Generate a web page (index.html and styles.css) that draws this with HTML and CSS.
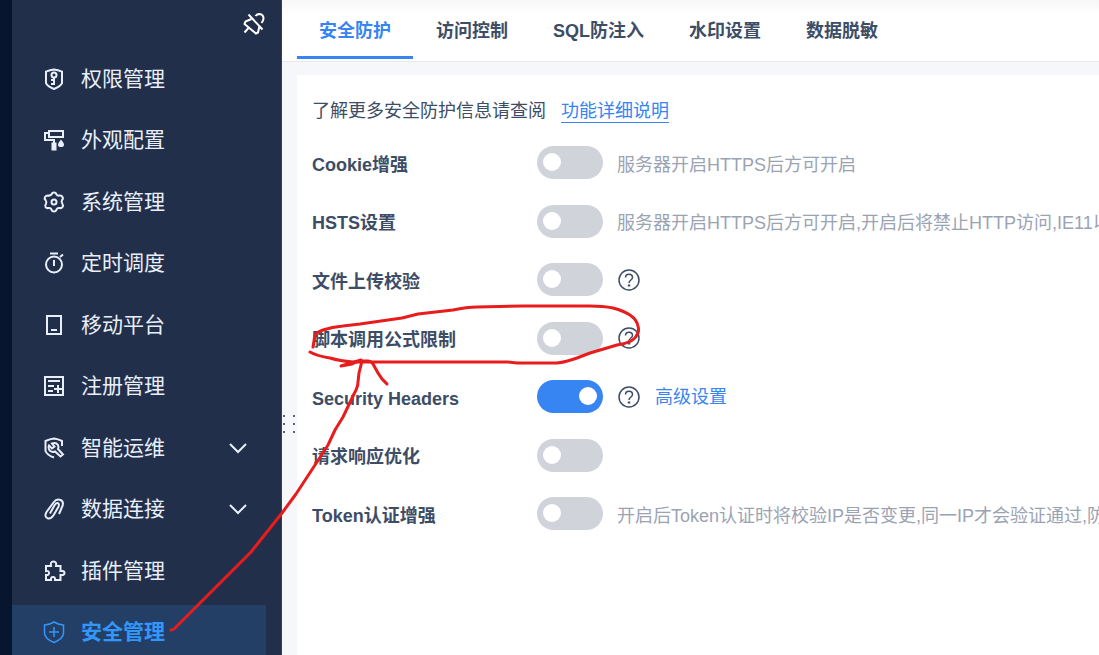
FILE: index.html
```html
<!DOCTYPE html>
<html lang="zh-CN">
<head>
    <meta charset="UTF-8">
    <meta name="viewport" content="width=device-width, initial-scale=1.0">
    <title>安全管理</title>
    <link rel="stylesheet" href="styles.css">
</head>
<body>
    <svg class="symbols" aria-hidden="true">
        <symbol id="chevron" viewBox="0 0 20 12">
            <path d="M2 2l8 8 8-8"/>
        </symbol>
        <symbol id="help" viewBox="0 0 22 22">
            <circle cx="11" cy="11" r="10"/>
            <path d="M7.500 8.500c0-4.500 7-4.500 7 0 0 2.500-3.500 2.500-3.500 5.500"/>
            <path d="M11 15.500v2" stroke-width="2.500"/>
        </symbol>
    </svg>

    <div class="layout">
        <div class="rail"></div>
        <aside class="sidebar">
            <div class="sidebar-head">
                <button type="button" class="pin" aria-label="取消固定">
                    <svg viewBox="0 0 24 24">
                        <path d="M6.500 2.500L20.500 17.500"/>
                        <path d="M9.500 7L3.500 9.500 2.500 12l11.500 9.500 2-1 1.500-6.500"/>
                        <path d="M6.500 16L2.500 20.500"/>
                        <path d="M13.500 4q1.500-2 4-2 4 .5 4 4.500 0 2-2 4.500"/>
                    </svg>
                </button>
            </div>
            <nav class="menu">
                <a href="#" class="menu-item">
                    <svg viewBox="0 0 24 24">
                        <path d="M12 2.500q-4 .5-8 2.200v11.500q1.500 3.500 8 5.800 6.500-2.300 8-5.800V4.700q-4-1.700-8-2.200z"/>
                        <circle cx="12" cy="8" r="2.500"/>
                        <path d="M12 10.500V18M9 13h3M9 17h3"/>
                    </svg>
                    <span>权限管理</span>
                </a>
                <a href="#" class="menu-item">
                    <svg viewBox="0 0 24 24">
                        <path d="M7 3h14v6H7zM7 5H3v7h9v3"/>
                        <path class="solid" d="M9.500 14.500h5v8h-5zM19 11.500q-6 7 0 7.500 6-.5 0-7.500z"/>
                    </svg>
                    <span>外观配置</span>
                </a>
                <a href="#" class="menu-item">
                    <svg viewBox="0 0 24 24">
                        <path d="M9.500 4.500Q10 2.500 12 2.500t2.500 2q1 1.500 3 1 2-.5 3 1.500t-.5 3q-1 2 .5 4 1 1.500 0 3t-3 1q-2-.5-3 1.500-.5 2-2.500 2t-2.500-2q-1-2-3-1.500-2 .5-3-1t.5-3q1-2-.5-4-1.500-1.500-.5-3t3-1.500q2 .5 3.500-1z"/>
                        <circle cx="12" cy="12" r="2.500"/>
                    </svg>
                    <span>系统管理</span>
                </a>
                <a href="#" class="menu-item">
                    <svg viewBox="0 0 24 24">
                        <circle cx="12" cy="13.500" r="8"/>
                        <path d="M12 9v6M8 2.500h8M18 6l3-2.500"/>
                    </svg>
                    <span>定时调度</span>
                </a>
                <a href="#" class="menu-item">
                    <svg viewBox="0 0 24 24">
                        <path d="M5 3h14v18H5zM9 17h6"/>
                    </svg>
                    <span>移动平台</span>
                </a>
                <a href="#" class="menu-item">
                    <svg viewBox="0 0 24 24">
                        <path d="M3 3h18v18H3zM6 7h12M6 12h6M6 17h5M12 15h8M16 11v8"/>
                    </svg>
                    <span>注册管理</span>
                </a>
                <a href="#" class="menu-item">
                    <svg viewBox="0 0 24 24">
                        <path d="M20 10V5q-4-2-8-2.500Q8 3 3.500 5v10q1.500 4 8.500 6.500"/>
                        <path d="M10 7.500q4-1.500 6 1.500 1 2 0 4l5 5.500-2.500 2-5.500-5q-4 1.500-6-2-1-2 0-4l3 3 2.500-2z"/>
                    </svg>
                    <span>智能运维</span>
                    <svg class="arrow"><use href="#chevron"/></svg>
                </a>
                <a href="#" class="menu-item">
                    <svg viewBox="0 0 24 24">
                        <path d="M17 17l3.500-8q1.500-4.500-2-6-4-1.500-7 2.500L4.500 15q-2.500 4.500 1 6.200 3.500 1 6-3l5-8.500q1-2.700-.5-3.500-2-.6-3.500 2L8 16.500"/>
                    </svg>
                    <span>数据连接</span>
                    <svg class="arrow"><use href="#chevron"/></svg>
                </a>
                <a href="#" class="menu-item">
                    <svg viewBox="0 0 24 24">
                        <path d="M4 7h5q-1-4.500 2.500-4.500T14 7h4.500v5q4-.5 4 2t-4 2v5H13q.5-3-2-3t-2 3H4v-5q3 .5 3-2t-3-2z"/>
                    </svg>
                    <span>插件管理</span>
                </a>
                <a href="#" class="menu-item active">
                    <svg viewBox="0 0 24 24">
                        <path d="M12 2q-4 2.500-9.500 3V13q0 5.500 9.500 9.500 9.500-4 9.500-9.500V5Q16 4.500 12 2zM12 7v10M7 12h10"/>
                    </svg>
                    <span>安全管理</span>
                </a>
            </nav>
        </aside>

        <main class="main">
            <svg class="drag-dots" viewBox="0 0 12 20" aria-hidden="true">
                <path d="M0 1h2v2H0zM10 1h2v2h-2zM0 9h2v2H0zM10 9h2v2h-2zM0 17h2v2H0zM10 17h2v2h-2z"/>
            </svg>
            <div class="tabs">
                <button type="button" class="tab active">安全防护</button>
                <button type="button" class="tab">访问控制</button>
                <button type="button" class="tab">SQL防注入</button>
                <button type="button" class="tab">水印设置</button>
                <button type="button" class="tab">数据脱敏</button>
            </div>

            <section class="card">
                <p class="intro">了解更多安全防护信息请查阅 <a href="#">功能详细说明</a></p>
                <div class="settings">
                    <div class="row">
                        <label for="cookie">Cookie增强</label>
                        <input type="checkbox" class="switch" id="cookie">
                        <span class="hint">服务器开启HTTPS后方可开启</span>
                    </div>
                    <div class="row">
                        <label for="hsts">HSTS设置</label>
                        <input type="checkbox" class="switch" id="hsts">
                        <span class="hint">服务器开启HTTPS后方可开启,开启后将禁止HTTP访问,IE11以</span>
                    </div>
                    <div class="row">
                        <label for="upload">文件上传校验</label>
                        <input type="checkbox" class="switch" id="upload">
                        <button type="button" class="help" aria-label="帮助"><svg><use href="#help"/></svg></button>
                    </div>
                    <div class="row">
                        <label for="script">脚本调用公式限制</label>
                        <input type="checkbox" class="switch" id="script">
                        <button type="button" class="help" aria-label="帮助"><svg><use href="#help"/></svg></button>
                    </div>
                    <div class="row">
                        <label for="headers">Security Headers</label>
                        <input type="checkbox" class="switch" id="headers" checked>
                        <button type="button" class="help" aria-label="帮助"><svg><use href="#help"/></svg></button>
                        <a href="#" class="advanced">高级设置</a>
                    </div>
                    <div class="row">
                        <label for="response">请求响应优化</label>
                        <input type="checkbox" class="switch" id="response">
                    </div>
                    <div class="row">
                        <label for="token">Token认证增强</label>
                        <input type="checkbox" class="switch" id="token">
                        <span class="hint">开启后Token认证时将校验IP是否变更,同一IP才会验证通过,防</span>
                    </div>
                </div>
            </section>
        </main>
    </div>

    <!-- Hand-drawn marker over the page -->
    <svg class="marker" viewBox="0 0 1099 655" aria-hidden="true">
        <path d="M313 347L315 335Q317 332 323 330 332 327 343 326L360 324 402 318 418 314 453 310Q467 307 477 307L523 306H590Q603 306 613 308 624 311 630 315 637 320 638 326 639 330 638 333 636 338 631 341 625 344 617 345L590 353 577 358Q566 362 557 363H517L507 362H353Q340 361 330 358 317 356 310 352"/>
        <path d="M171 630Q173 630 175 628L220 583 251 552 282 513 296 494 315 465 328 445 335 430 343 417 354 394Q358 387 358 382L359 373 362 361"/>
        <path d="M341 366L361 360 352 364 341 366M362 361H368Q371 361 373 364L378 373Q382 380 387 384"/>
    </svg>
</body>
</html>
```
FILE: styles.css
```css
* {
    box-sizing: border-box;
}
body {
    margin: 0;
    font-family: "Liberation Sans", "Noto Sans CJK SC", sans-serif;
    font-size: 18px;
    line-height: 24px;
    color: #3d4d66;
    overflow: hidden;
}
button {
    border: none;
    padding: 0;
    background: none;
    font: inherit;
    color: inherit;
}
a {
    text-decoration: none;
}
.symbols {
    display: none;
}
.layout {
    display: flex;
    height: 100vh;
}

/* Sidebar */
.rail {
    flex: 0 0 12px;
    background: #07152f;
}
.sidebar {
    flex: 0 0 270px;
    background: #222f4b;
    border-right: 1px solid #34415e;
    color: #e9effa;
}
.sidebar svg {
    fill: none;
    stroke: currentColor;
    stroke-width: 2;
}
.sidebar .solid {
    fill: currentColor;
    stroke: none;
}
.sidebar-head {
    display: flex;
    justify-content: flex-end;
    height: 52px;
    padding: 12px 15px 0 0;
}
.pin {
    width: 24px;
    height: 24px;
    color: #fff;
}
.pin svg {
    display: block;
    width: 24px;
    height: 24px;
}
.menu {
    display: flex;
    flex-direction: column;
    justify-content: space-between;
    height: 607px;
    padding-right: 15px;
}
.menu-item {
    display: flex;
    align-items: center;
    gap: 15px;
    height: 54px;
    padding: 0 18px 0 30px;
    font-size: 21px;
    color: #e9effa;
}
.menu-item svg {
    width: 24px;
    height: 24px;
}
.menu-item .arrow {
    width: 20px;
    height: 12px;
    margin-left: auto;
}
.menu-item.active {
    background: #243f66;
    color: #3296fa;
    font-weight: bold;
}
.menu-item.active svg {
    stroke-width: 1.5;
}

/* Content */
.main {
    position: relative;
    flex: 1;
    min-width: 0;
    display: flex;
    flex-direction: column;
    background: #f6f7fa;
}
.drag-dots {
    position: absolute;
    left: 1px;
    top: 414px;
    width: 12px;
    height: 20px;
    fill: #55617a;
}
.tabs {
    display: flex;
    gap: 1px;
    height: 62px;
    padding: 0 15px 2px;
    border-bottom: 1px solid #e8e9ed;
    background: linear-gradient(#f7f7f8, #fff 14px);
}
.tab {
    padding: 5px 22px 0;
    border-bottom: 3px solid transparent;
    font-weight: bold;
    white-space: nowrap;
}
.tab.active {
    color: #3685f2;
    border-bottom-color: #3685f2;
}
.card {
    flex: 1;
    margin: 13px 0 0 15px;
    padding: 24px 0 0 15px;
    background: #fff;
    overflow: hidden;
}
.intro {
    margin: 0 0 23px;
}
.intro a {
    display: inline-block;
    height: 24px;
    margin-left: 10px;
    border-bottom: 1px solid #3685f2;
    color: #3685f2;
}
.settings {
    display: flex;
    flex-direction: column;
    justify-content: space-between;
    height: 384px;
}
.row {
    display: flex;
    align-items: center;
    height: 33px;
    white-space: nowrap;
}
.row label {
    flex: 0 0 225px;
    padding-top: 4px;
    font-weight: bold;
}
.switch {
    appearance: none;
    flex: none;
    width: 66px;
    height: 33px;
    margin: 0 14px 0 0;
    padding: 7px 6px;
    border-radius: 17px;
    background: #d0d3da;
}
.switch::before {
    content: "";
    display: block;
    width: 18px;
    height: 18px;
    border-radius: 50%;
    background: #fff;
}
.switch:checked {
    background: #3685f2;
}
.switch:checked::before {
    margin-left: auto;
}
.hint {
    padding-top: 4px;
    color: #9ba3b3;
}
.help {
    width: 22px;
    height: 22px;
    margin-left: 1px;
}
.help svg {
    display: block;
    width: 22px;
    height: 22px;
    fill: none;
    stroke: #3d4d66;
    stroke-width: 1.5;
}
.advanced {
    margin-left: 15px;
    color: #3685f2;
}

.marker {
    position: absolute;
    left: 0;
    top: 0;
    width: 1099px;
    height: 655px;
    pointer-events: none;
    fill: none;
    stroke: #e81c1c;
    stroke-width: 3;
    stroke-linecap: round;
    stroke-linejoin: round;
}
```
